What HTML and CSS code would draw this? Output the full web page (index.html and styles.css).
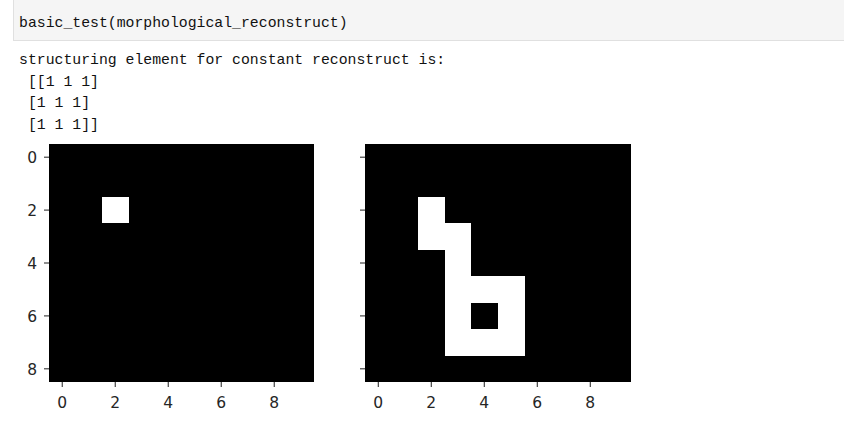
FILE: index.html
```html
<!DOCTYPE html>
<html>
<head>
<meta charset="utf-8">
<link rel="stylesheet" href="styles.css">
</head>
<body>
<div class="cell-input"><code class="code">basic_test(morphological_reconstruct)</code></div>
<pre class="output"><span>structuring element for constant reconstruct is:</span>
<span> [[1 1 1]</span>
<span> [1 1 1]</span>
<span> [1 1 1]]</span></pre>
<svg class="figure" width="660" height="298" viewBox="0 0 660 298" xmlns="http://www.w3.org/2000/svg">
  <!-- left axes -->
  <svg x="49" y="8" width="265" height="238" viewBox="0 0 10 9" preserveAspectRatio="none" shape-rendering="crispEdges">
    <rect x="0" y="0" width="10" height="9" fill="#000"/>
    <rect x="2" y="2" width="1" height="1" fill="#fff"/>
  </svg>
  <g class="ticks">
    <line x1="44" y1="21.2" x2="49" y2="21.2"/>
    <line x1="44" y1="74.1" x2="49" y2="74.1"/>
    <line x1="44" y1="127" x2="49" y2="127"/>
    <line x1="44" y1="179.9" x2="49" y2="179.9"/>
    <line x1="44" y1="232.8" x2="49" y2="232.8"/>
    <line x1="62.25" y1="246" x2="62.25" y2="251"/>
    <line x1="115.25" y1="246" x2="115.25" y2="251"/>
    <line x1="168.25" y1="246" x2="168.25" y2="251"/>
    <line x1="221.25" y1="246" x2="221.25" y2="251"/>
    <line x1="274.25" y1="246" x2="274.25" y2="251"/>
  </g>
  <g class="ylabels">
    <text x="37" y="26.9">0</text>
    <text x="37" y="79.8">2</text>
    <text x="37" y="132.7">4</text>
    <text x="37" y="185.6">6</text>
    <text x="37" y="238.5">8</text>
  </g>
  <g class="xlabels">
    <text x="62.25" y="272.3">0</text>
    <text x="115.25" y="272.3">2</text>
    <text x="168.25" y="272.3">4</text>
    <text x="221.25" y="272.3">6</text>
    <text x="274.25" y="272.3">8</text>
  </g>
  <!-- right axes -->
  <svg x="365" y="8" width="266" height="238" viewBox="0 0 10 9" preserveAspectRatio="none" shape-rendering="crispEdges">
    <rect x="0" y="0" width="10" height="9" fill="#000"/>
    <rect x="2" y="2" width="1" height="2" fill="#fff"/>
    <rect x="3" y="3" width="1" height="5" fill="#fff"/>
    <rect x="4" y="5" width="2" height="1" fill="#fff"/>
    <rect x="5" y="6" width="1" height="1" fill="#fff"/>
    <rect x="4" y="7" width="2" height="1" fill="#fff"/>
  </svg>
  <g class="ticks">
    <line x1="360" y1="21.2" x2="365" y2="21.2"/>
    <line x1="360" y1="74.1" x2="365" y2="74.1"/>
    <line x1="360" y1="127" x2="365" y2="127"/>
    <line x1="360" y1="179.9" x2="365" y2="179.9"/>
    <line x1="360" y1="232.8" x2="365" y2="232.8"/>
    <line x1="378.3" y1="246" x2="378.3" y2="251"/>
    <line x1="431.3" y1="246" x2="431.3" y2="251"/>
    <line x1="484.3" y1="246" x2="484.3" y2="251"/>
    <line x1="537.3" y1="246" x2="537.3" y2="251"/>
    <line x1="590.3" y1="246" x2="590.3" y2="251"/>
  </g>
  <g class="xlabels">
    <text x="378.3" y="272.3">0</text>
    <text x="431.3" y="272.3">2</text>
    <text x="484.3" y="272.3">4</text>
    <text x="537.3" y="272.3">6</text>
    <text x="590.3" y="272.3">8</text>
  </g>
</svg>
</body>
</html>
```
FILE: styles.css
```css
html, body {
  margin: 0;
  padding: 0;
  background: #fff;
}

.cell-input {
  box-sizing: border-box;
  height: 41px;
  margin-left: 13px;
  padding: 13px 0 0 5px;
  background: #f5f5f5;
  border-left: 1px solid #e0e0e0;
  border-bottom: 1px solid #e0e0e0;
}

.code {
  display: block;
  font-family: "Liberation Mono", "DejaVu Sans Mono", monospace;
  font-size: 14.8px;
  line-height: 21.5px;
  color: #111;
  white-space: pre;
}

.output {
  margin: 9px 0 0 0;
  padding-left: 19px;
  font-family: "Liberation Mono", "DejaVu Sans Mono", monospace;
  font-size: 14.8px;
  line-height: 21.5px;
  color: #111;
}

.figure {
  display: block;
}

.ticks line {
  stroke: #333;
  stroke-width: 1.1;
}

.ylabels text,
.xlabels text {
  font-family: "DejaVu Sans", sans-serif;
  font-size: 15.5px;
  fill: #262626;
}

.ylabels text {
  text-anchor: end;
}

.xlabels text {
  text-anchor: middle;
}
```
